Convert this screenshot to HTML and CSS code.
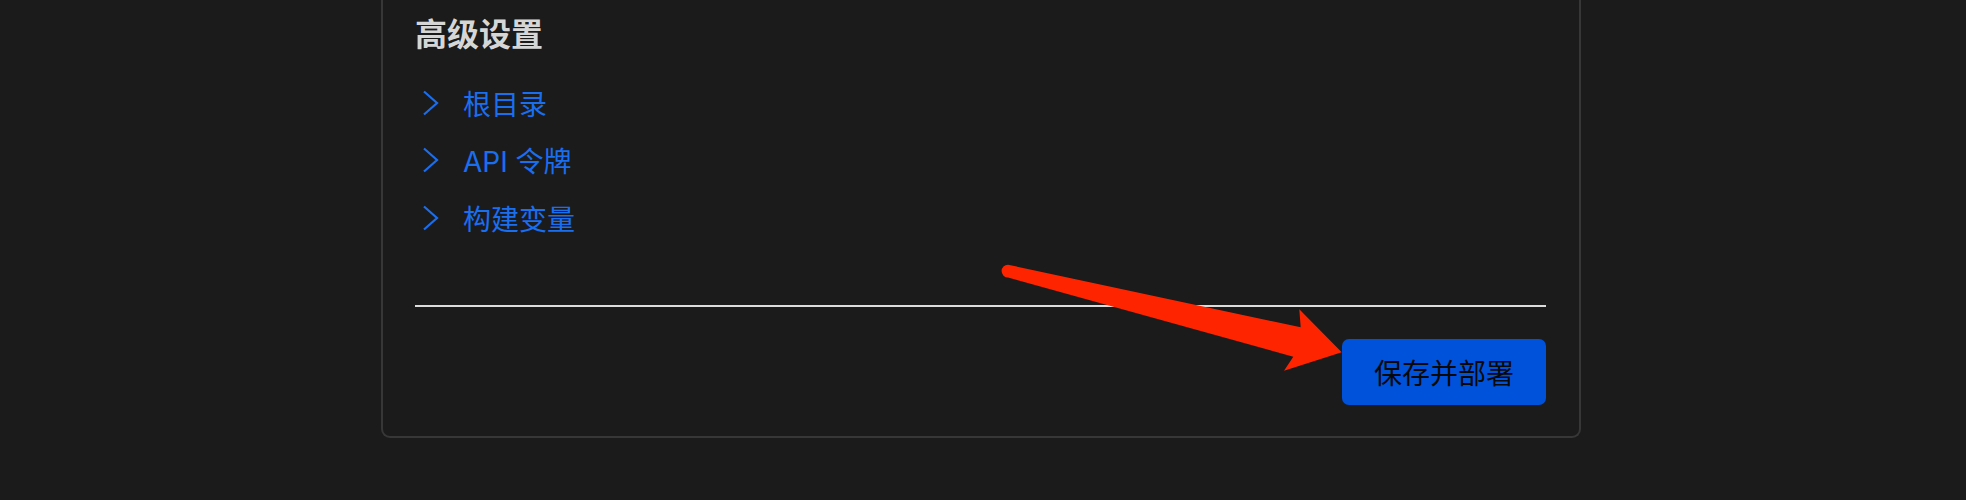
FILE: index.html
```html
<!DOCTYPE html>
<html lang="zh-CN">
<head>
<meta charset="utf-8">
<title>高级设置</title>
<link rel="stylesheet" href="styles.css">
</head>
<body>
<div class="card">
  <h2 class="title">高级设置</h2>
  <ul class="list">
    <li class="item">
      <svg class="chev" width="32" height="32" viewBox="0 0 32 32"><polyline points="9,4.5 22,16 9,27.5" fill="none" stroke="currentColor" stroke-width="2.2" stroke-linejoin="miter"/></svg>
      <span>根目录</span>
    </li>
    <li class="item">
      <svg class="chev" width="32" height="32" viewBox="0 0 32 32"><polyline points="9,4.5 22,16 9,27.5" fill="none" stroke="currentColor" stroke-width="2.2" stroke-linejoin="miter"/></svg>
      <span>API 令牌</span>
    </li>
    <li class="item">
      <svg class="chev" width="32" height="32" viewBox="0 0 32 32"><polyline points="9,4.5 22,16 9,27.5" fill="none" stroke="currentColor" stroke-width="2.2" stroke-linejoin="miter"/></svg>
      <span>构建变量</span>
    </li>
  </ul>
  <div class="divider"></div>
  <div class="footer">
    <button class="btn">保存并部署</button>
  </div>
</div>
<svg class="annot" width="1966" height="500" viewBox="0 0 1966 500">
  <path d="M1008,264.7 L1300.7,327.3 L1299.3,309.3 L1341.7,352.3 L1284,370.7 L1293.3,356.7 L1008,277.5 A6.4,6.4 0 0 1 1008,264.7 Z" fill="#ff2400"/>
</svg>
</body>
</html>
```

FILE: styles.css
```css
html, body {
  margin: 0;
  padding: 0;
  background: #1b1b1b;
}
body {
  position: relative;
  width: 1966px;
  height: 500px;
  overflow: hidden;
  font-family: "Inter", "Noto Sans CJK SC", sans-serif;
}
.card {
  box-sizing: border-box;
  width: 1200px;
  margin-left: 381px;
  border: 2px solid #373737;
  border-top: none;
  border-radius: 0 0 9px 9px;
  padding: 8px 33px 31px 32px;
}
.title {
  margin: 0;
  font-size: 32px;
  line-height: 48px;
  font-weight: 700;
  color: #d6d6d6;
  font-family: "Noto Sans CJK SC", sans-serif;
}
.list {
  list-style: none;
  margin: 18px 0 0;
  padding: 0;
}
.item {
  display: flex;
  align-items: center;
  gap: 16px;
  height: 57.5px;
  color: #1a6ef0;
  font-size: 28px;
}
.chev {
  display: block;
  flex: none;
}
.divider {
  margin-top: 58.5px;
  height: 2px;
  background: #dcdcdc;
}
.footer {
  display: flex;
  justify-content: flex-end;
  margin-top: 32px;
}
.btn {
  height: 66px;
  padding: 0 32px;
  border: none;
  border-radius: 7px;
  background: #0052da;
  color: #080808;
  font-family: "Noto Sans CJK SC", sans-serif;
  font-size: 28px;
  line-height: 66px;
}
.annot {
  position: absolute;
  left: 0;
  top: 0;
  pointer-events: none;
}
```
